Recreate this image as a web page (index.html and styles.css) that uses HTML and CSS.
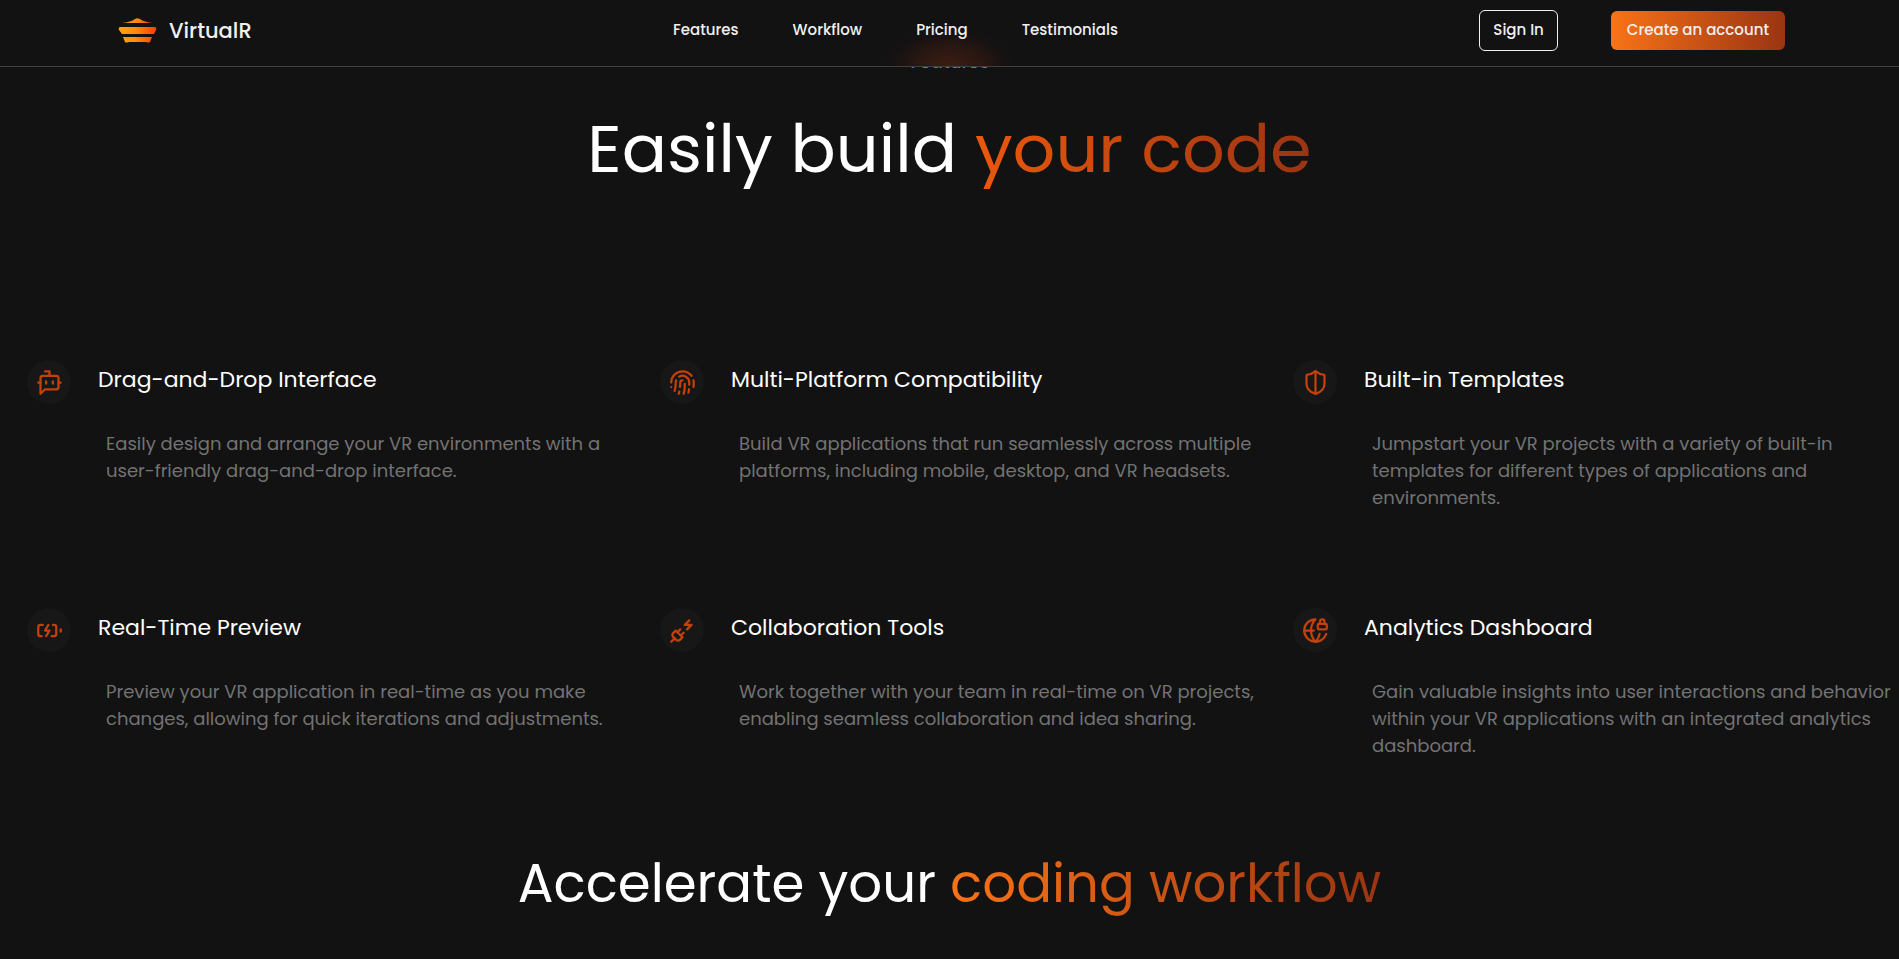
FILE: index.html
```html
<!DOCTYPE html>
<html lang="en">
<head>
<meta charset="utf-8">
<meta name="viewport" content="width=device-width, initial-scale=1">
<title>VirtualR</title>
<link rel="stylesheet" href="styles.css">
</head>
<body>
<header class="site-header">
  <div class="header-inner">
    <a class="brand" href="#">
      <svg class="brand-mark" viewBox="0 0 39 26" aria-hidden="true">
        <defs><linearGradient id="flame" x1="0" y1="0" x2="39" y2="0" gradientUnits="userSpaceOnUse"><stop offset="0" stop-color="#ffa514"/><stop offset=".45" stop-color="#ff8a12"/><stop offset="1" stop-color="#ff3c00"/></linearGradient></defs>
        <path fill="url(#flame)" d="M4 5 Q13 4 17 1 Q19.500-.5 22 1 Q26 4 35 5ZM2 9H37Q39 10 38 12L36 16H4L1 12Q0 10 2 9ZM5 19H34L32 24Q31 25 28 24H11Q8 25 7 24Z"/>
      </svg>
      <span>VirtualR</span>
    </a>
    <nav class="nav">
      <a href="#">Features</a>
      <a href="#">Workflow</a>
      <a href="#">Pricing</a>
      <a href="#">Testimonials</a>
    </nav>
    <div class="actions">
      <a class="btn btn-outline" href="#">Sign In</a>
      <a class="btn btn-primary" href="#">Create an account</a>
    </div>
  </div>
</header>
<main>
  <section class="features">
    <div class="intro">
      <span class="tag">Features</span>
      <h1>Easily build <span class="accent">your code</span></h1>
    </div>
    <div class="grid">
      <article class="card">
        <div class="icon"><svg viewBox="0 0 24 24" aria-hidden="true"><path d="M12 6V2H8"/><path d="m8 18-4 4V8a2 2 0 0 1 2-2h12a2 2 0 0 1 2 2v8a2 2 0 0 1-2 2Z"/><path d="M2 12h2M9 11v2M15 11v2M20 12h2"/></svg></div>
        <div class="copy"><h2>Drag-and-Drop Interface</h2><p>Easily design and arrange your VR environments with a user-friendly drag-and-drop interface.</p></div>
      </article>
      <article class="card">
        <div class="icon"><svg viewBox="0 0 24 24" aria-hidden="true"><path d="M2 12C2 6.500 6.500 2 12 2a10 10 0 0 1 8 4"/><path d="M5 19.500C5.500 18 6 15 6 12c0-.7.12-1.370.34-2"/><path d="M17.290 21.020c.12-.6.43-2.300.5-3.020"/><path d="M12 10a2 2 0 0 0-2 2c0 1.020-.1 2.510-.26 4"/><path d="M8.650 22c.21-.66.45-1.320.57-2"/><path d="M14 13.120c0 2.380 0 6.380-1 8.880"/><path d="M2 16h.01"/><path d="M21.800 16c.2-2 .131-5.354 0-6"/><path d="M9 6.800a6 6 0 0 1 9 5.200c0 .47 0 1.170-.02 2"/></svg></div>
        <div class="copy"><h2>Multi-Platform Compatibility</h2><p>Build VR applications that run seamlessly across multiple platforms, including mobile, desktop, and VR headsets.</p></div>
      </article>
      <article class="card">
        <div class="icon"><svg viewBox="0 0 24 24" aria-hidden="true"><path d="M20 13c0 5-3.500 7.500-7.660 8.950a1 1 0 0 1-.67-.01C7.500 20.500 4 18 4 13V6a1 1 0 0 1 1-1c2 0 4.500-1.200 6.240-2.720a1.170 1.170 0 0 1 1.520 0C14.510 3.810 17 5 19 5a1 1 0 0 1 1 1z"/><path d="M12 22V2"/></svg></div>
        <div class="copy"><h2>Built-in Templates</h2><p>Jumpstart your VR projects with a variety of built-in templates for different types of applications and environments.</p></div>
      </article>
      <article class="card">
        <div class="icon"><svg viewBox="0 0 24 24" aria-hidden="true"><path d="M15 7h1a2 2 0 0 1 2 2v6a2 2 0 0 1-2 2h-2"/><path d="M6 7H4a2 2 0 0 0-2 2v6a2 2 0 0 0 2 2h1"/><path d="m11 7-3 5h4l-3 5"/><path d="M22 11v2"/></svg></div>
        <div class="copy"><h2>Real-Time Preview</h2><p>Preview your VR application in real-time as you make changes, allowing for quick iterations and adjustments.</p></div>
      </article>
      <article class="card">
        <div class="icon"><svg viewBox="0 0 24 24" aria-hidden="true"><path d="M6.300 20.300a2.400 2.400 0 0 0 3.400 0L12 18l-6-6-2.300 2.300a2.400 2.400 0 0 0 0 3.400Z"/><path d="m2 22 3-3M7.500 13.500 10 11M10.500 16.500 13 14"/><path d="m18 3-4 4h6l-4 4"/></svg></div>
        <div class="copy"><h2>Collaboration Tools</h2><p>Work together with your team in real-time on VR projects, enabling seamless collaboration and idea sharing.</p></div>
      </article>
      <article class="card">
        <div class="icon"><svg viewBox="0 0 24 24" aria-hidden="true"><path d="M15.686 15A14.500 14.500 0 0 1 12 22a14.500 14.500 0 0 1 0-20 10 10 0 1 0 9.542 13"/><path d="M2 12h8.500"/><path d="M20 6V4a2 2 0 1 0-4 0v2"/><rect width="8" height="5" x="14" y="6" rx="1"/></svg></div>
        <div class="copy"><h2>Analytics Dashboard</h2><p>Gain valuable insights into user interactions and behavior within your VR applications with an integrated analytics dashboard.</p></div>
      </article>
    </div>
  </section>
  <section class="workflow">
    <h2>Accelerate your <span class="accent">coding workflow</span></h2>
  </section>
</main>
</body>
</html>
```
FILE: styles.css
```css
* {
  box-sizing: border-box;
}

body {
  margin: 0;
  background: #121212;
  color: #fff;
  font-family: Poppins, Inter, sans-serif;
  overflow: hidden;
}

h1,
h2,
p {
  margin: 0;
  font-weight: 400;
}

a {
  color: inherit;
  text-decoration: none;
}

.site-header {
  position: sticky;
  top: 0;
  z-index: 10;
  height: 67px;
  margin-bottom: -67px;
  padding: 10px 114px 0 118px;
  border-bottom: 1px solid #404040;
  background: radial-gradient(68px 40px at 50% 100%, #3d1c12, #2b1812 45%, #171212 80%, #121212) #121212;
}

.header-inner {
  display: flex;
  align-items: center;
  justify-content: space-between;
  color: #f0f0f0;
  font-size: 15px;
  font-weight: 500;
}

.brand {
  display: flex;
  align-items: center;
  gap: 12px;
  font-size: 21px;
}

.brand-mark {
  width: 39px;
  height: 26px;
}

.nav {
  display: flex;
  gap: 54px;
  margin-left: 60px;
  padding-bottom: 2px;
}

.actions {
  display: flex;
  align-items: center;
  gap: 53px;
}

.btn {
  padding: 7px 13px 9px;
  border-radius: 6px;
  line-height: 23px;
}

.btn-outline {
  border: 1px solid #f0f0f0;
}

.btn-primary {
  padding-right: 16px;
  padding-left: 16px;
  background: linear-gradient(to right, #f97316, #9a3412);
}

.intro {
  display: flex;
  flex-direction: column;
  align-items: center;
  padding-top: 48px;
}

.tag {
  padding: 0 10px;
  color: #ea580c;
  font-size: 18px;
  font-weight: 500;
  line-height: 28px;
}

.intro h1 {
  margin-top: 33px;
  font-size: 67px;
  line-height: 80px;
}

.accent {
  background: linear-gradient(to right, #ea580c, #9a3412);
  background-clip: text;
  color: transparent;
}

.grid {
  display: grid;
  grid-template-columns: repeat(3, 1fr);
  row-gap: 97px;
  margin-top: 171px;
}

.card {
  display: flex;
  gap: 27px;
  padding-left: 27px;
}

.icon {
  display: flex;
  flex: none;
  align-items: center;
  justify-content: center;
  width: 44px;
  height: 44px;
  border-radius: 50%;
  background: #171717;
}

.icon svg {
  width: 27px;
  height: 27px;
  fill: none;
  stroke: #c2410c;
  stroke-width: 2;
  stroke-linecap: round;
  stroke-linejoin: round;
}

.copy h2 {
  font-size: 22px;
  line-height: 40px;
}

.copy p {
  margin-top: 30px;
  padding: 0 8px;
  color: #737373;
  font-size: 18px;
  line-height: 27px;
}

.workflow {
  margin-top: 85px;
  text-align: center;
}

.workflow h2 {
  font-size: 53px;
  line-height: 80px;
}

.workflow .accent {
  background-image: linear-gradient(to right, #f97316, #9a3412);
}
```
